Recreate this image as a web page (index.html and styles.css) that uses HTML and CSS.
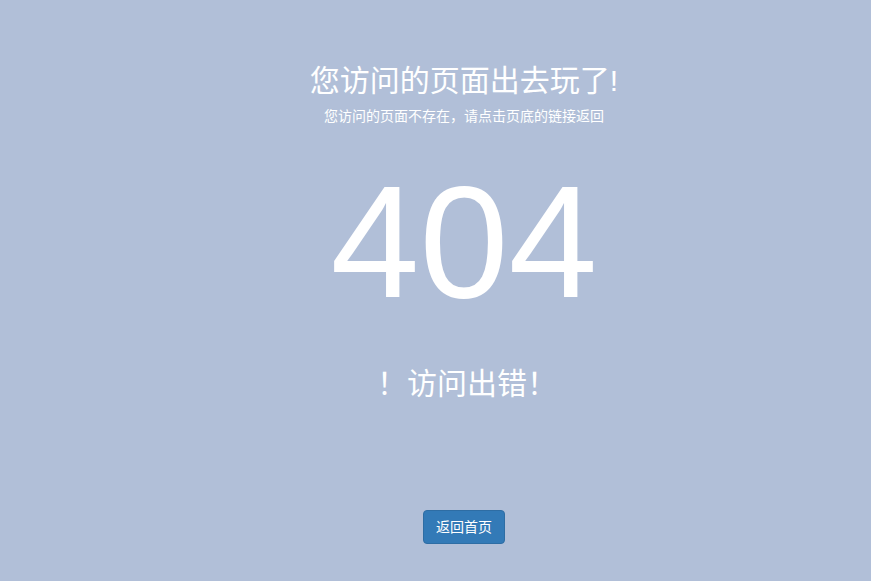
FILE: index.html
```html
<!DOCTYPE html>
<html lang="zh-CN">
<head>
    <meta charset="UTF-8">
    <title>404 - 页面不存在</title>
    <link rel="stylesheet" href="styles.css">
</head>
<body>
<div class="page">
    <h1 class="title">您访问的页面出去玩了!</h1>
    <p class="subtitle">您访问的页面不存在，请点击页底的链接返回</p>
    <div class="code">404</div>
    <h2 class="error"><span class="mark">！</span>访问出错！</h2>
    <div class="actions">
        <a class="btn" href="/">返回首页</a>
    </div>
</div>
</body>
</html>
```

FILE: styles.css
```css
html, body {
    height: 100%;
}

body {
    margin: 0;
    background-color: #b1bfd8;
    color: #fff;
    font-family: "Liberation Sans", "Noto Sans CJK SC", sans-serif;
}

/* 内容区整体偏右 */
.page {
    padding-left: 57px;
    padding-top: 60px;
    text-align: center;
    text-spacing-trim: space-all;
}

.title {
    margin: 0;
    font-size: 30px;
    font-weight: normal;
    line-height: 42px;
}

.subtitle {
    margin: 4px 0 0;
    font-size: 14px;
    line-height: 20px;
}

.code {
    font-size: 160px;
    line-height: 1;
    margin-top: 36px;
}

.error {
    margin: 42px 0 0;
    font-size: 30px;
    font-weight: normal;
    line-height: 40px;
}

/* 开头的叹号往右挪一点 */
.error .mark {
    padding-left: 6px;
}

.actions {
    margin-top: 106px;
}

.btn {
    display: inline-block;
    padding: 6px 12px;
    font-size: 14px;
    line-height: 20px;
    color: #fff;
    text-decoration: none;
    background-color: #337ab7;
    border: 1px solid #2e6da4;
    border-radius: 4px;
}

.btn:hover {
    background-color: #286090;
}
```
